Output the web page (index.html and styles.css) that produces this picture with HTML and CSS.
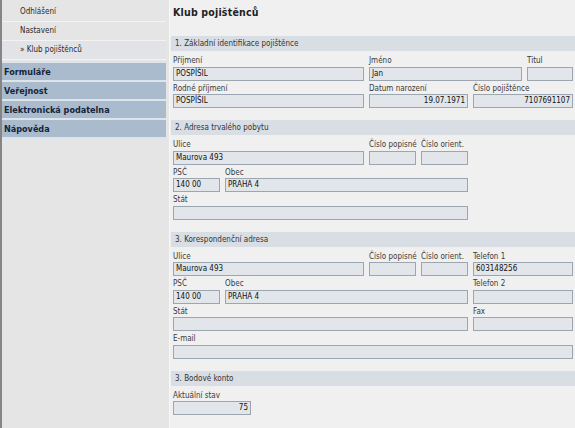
FILE: index.html
```html
<!DOCTYPE html>
<html lang="cs">
<head>
<meta charset="utf-8">
<title>Klub pojištěnců</title>
<link rel="stylesheet" href="styles.css">
</head>
<body>
<div class="app">
  <nav class="sidebar">
    <ul class="submenu">
      <li>Odhlášení</li>
      <li>Nastavení</li>
      <li class="active">» Klub pojištěnců</li>
    </ul>
    <ul class="menu">
      <li>Formuláře</li>
      <li>Veřejnost</li>
      <li>Elektronická podatelna</li>
      <li>Nápověda</li>
    </ul>
  </nav>
  <main class="main">
    <h1 class="title">Klub pojištěnců</h1>

    <section class="group">
      <h2 class="group-head">1. Základní identifikace pojištěnce</h2>
      <div class="group-body">
        <div class="row">
          <div class="field w192"><span class="lbl">Příjmení</span><div class="input">POSPÍŠIL</div></div>
          <div class="field w153"><span class="lbl">Jméno</span><div class="input">Jan</div></div>
          <div class="field w46"><span class="lbl">Titul</span><div class="input"></div></div>
        </div>
        <div class="row">
          <div class="field w192"><span class="lbl">Rodné příjmení</span><div class="input">POSPÍŠIL</div></div>
          <div class="field w99"><span class="lbl">Datum narození</span><div class="input right">19.07.1971</div></div>
          <div class="field w100"><span class="lbl">Číslo pojištěnce</span><div class="input right">7107691107</div></div>
        </div>
      </div>
    </section>

    <section class="group">
      <h2 class="group-head">2. Adresa trvalého pobytu</h2>
      <div class="group-body">
        <div class="row">
          <div class="field w192"><span class="lbl">Ulice</span><div class="input">Maurova 493</div></div>
          <div class="field w47"><span class="lbl">Číslo popisné</span><div class="input"></div></div>
          <div class="field w47"><span class="lbl">Číslo orient.</span><div class="input"></div></div>
        </div>
        <div class="row">
          <div class="field w47"><span class="lbl">PSČ</span><div class="input">140 00</div></div>
          <div class="field w243"><span class="lbl">Obec</span><div class="input">PRAHA 4</div></div>
        </div>
        <div class="row">
          <div class="field w295"><span class="lbl">Stát</span><div class="input"></div></div>
        </div>
      </div>
    </section>

    <section class="group">
      <h2 class="group-head">3. Korespondenční adresa</h2>
      <div class="group-body">
        <div class="row">
          <div class="field w192"><span class="lbl">Ulice</span><div class="input">Maurova 493</div></div>
          <div class="field w47"><span class="lbl">Číslo popisné</span><div class="input"></div></div>
          <div class="field w47"><span class="lbl">Číslo orient.</span><div class="input"></div></div>
          <div class="field w100"><span class="lbl">Telefon 1</span><div class="input">603148256</div></div>
        </div>
        <div class="row">
          <div class="field w47"><span class="lbl">PSČ</span><div class="input">140 00</div></div>
          <div class="field w243"><span class="lbl">Obec</span><div class="input">PRAHA 4</div></div>
          <div class="field w100"><span class="lbl">Telefon 2</span><div class="input"></div></div>
        </div>
        <div class="row">
          <div class="field w295"><span class="lbl">Stát</span><div class="input"></div></div>
          <div class="field w100"><span class="lbl">Fax</span><div class="input"></div></div>
        </div>
        <div class="row">
          <div class="field w400"><span class="lbl">E-mail</span><div class="input"></div></div>
        </div>
      </div>
    </section>

    <section class="group">
      <h2 class="group-head">3. Bodové konto</h2>
      <div class="group-body">
        <div class="row">
          <div class="field w78"><span class="lbl">Aktuální stav</span><div class="input right">75</div></div>
        </div>
      </div>
    </section>
  </main>
</div>
</body>
</html>
```

FILE: styles.css
```css
* { box-sizing: border-box; }
html, body { margin: 0; padding: 0; height: 100%; }
body {
  font-family: "DejaVu Sans Condensed", "DejaVu Sans", "Liberation Sans", sans-serif;
  font-stretch: condensed;
  font-size: 8px;
  color: #1a1a1a;
  background: #f0f0f0;
  overflow: hidden;
}
.app {
  display: flex;
  min-height: 428px;
}
.sidebar {
  width: 170px;
  flex: none;
  background: #e5e5e5;
  border-left: 2px solid #858585;
  border-right: 1px solid #f7f7f7;
  padding-top: 3px;
  padding-right: 3px;
}
.submenu, .menu {
  list-style: none;
  margin: 0;
  padding: 0;
}
.submenu li {
  height: 19px;
  line-height: 18px;
  padding-left: 18px;
  border-bottom: 1px solid #f3f3f3;
  color: #2a2a2a;
}
.submenu li.active {
  background: #e1e3e6;
}
.menu li {
  height: 19px;
  line-height: 18px;
  padding-left: 2px;
  background: #a9bbcc;
  border-top: 2px solid #dde4ea;
  font-weight: bold;
  font-size: 9px;
  color: #15243a;
}
.menu li:first-child {
  margin-top: 1px;
}
.menu li:last-child {
  height: 21px;
  border-bottom: 2px solid #dde4ea;
}
.main {
  flex: 1;
  padding: 5px 0 0 3px;
}
.title {
  margin: 0 0 17px 0;
  font-size: 10.5px;
  font-weight: bold;
  line-height: 14px;
  color: #222;
  letter-spacing: 0.2px;
}
.group {
  margin-bottom: 12px;
}
.group-head {
  margin: 0 0 0 -2px;
  height: 15px;
  line-height: 15px;
  padding-left: 4px;
  background: #d9dee4;
  font-weight: normal;
  font-size: 8px;
  color: #333;
}
.group-body {
  padding-top: 2px;
}
.row {
  display: flex;
  gap: 5px;
}
.field {
  display: flex;
  flex-direction: column;
}
.lbl {
  height: 13.5px;
  line-height: 15px;
  color: #3a3a3a;
  white-space: nowrap;
}
.input {
  height: 14px;
  line-height: 12px;
  padding: 0 2px;
  background: #e2e6ea;
  border: 1px solid #9ca6b1;
  color: #111;
  white-space: nowrap;
}
.input.right { text-align: right; }
.w192 { width: 191px; }
.w153 { width: 153px; }
.w46 { width: 46px; }
.w47 { width: 47px; }
.w99 { width: 99px; }
.w100 { width: 100px; }
.w243 { width: 243px; }
.w295 { width: 295px; }
.w400 { width: 400px; }
.w78 { width: 78px; }
```
